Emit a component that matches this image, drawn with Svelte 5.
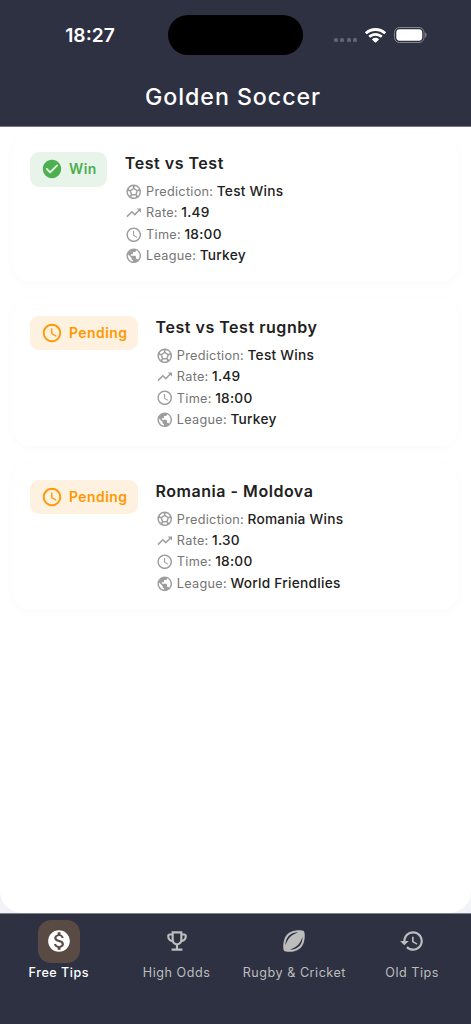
<script lang="ts">
  const icons = {
    check: "M12 2C6.48 2 2 6.48 2 12s4.48 10 10 10 10-4.48 10-10S17.52 2 12 2zM9.29 16.29L5.7 12.7c-.39-.39-.39-1.02 0-1.41.39-.39 1.02-.39 1.41 0L10 14.17l6.88-6.88c.39-.39 1.02-.39 1.41 0 .39.39.39 1.02 0 1.41l-7.59 7.59c-.38.39-1.02.39-1.41 0z",
    clock: "M11.99 2C6.47 2 2 6.48 2 12s4.47 10 9.99 10C17.52 22 22 17.52 22 12S17.52 2 11.99 2zM12 20c-4.42 0-8-3.58-8-8s3.58-8 8-8 8 3.58 8 8-3.58 8-8 8zm.5-13H11v6l5.25 3.15.75-1.23-4.5-2.67z",
    trend: "M16 6l2.29 2.29-4.88 4.88-4-4L2 16.59 3.41 18l6-6 4 4 6.3-6.29L22 12V6z",
    globe: "M12 2C6.48 2 2 6.48 2 12s4.48 10 10 10 10-4.48 10-10S17.52 2 12 2zm-1 17.93c-3.95-.49-7-3.85-7-7.93 0-.62.08-1.21.21-1.79L9 15v1c0 1.1.9 2 2 2v1.93zm6.9-2.54c-.26-.81-1-1.39-1.9-1.39h-1v-3c0-.55-.45-1-1-1H8v-2h2c.55 0 1-.45 1-1V7h2c1.1 0 2-.9 2-2v-.41c2.93 1.19 5 4.06 5 7.41 0 2.08-.8 3.97-2.1 5.39z",
    ball: "M12 2C6.48 2 2 6.48 2 12c0 5.52 4.48 10 10 10s10-4.48 10-10C22 6.48 17.52 2 12 2zm1 3.3l1.35-.95c1.82.56 3.37 1.76 4.38 3.34l-.39 1.34-1.35.46L13 6.9V5.3zm-3.35-.95L11 5.3v1.6L7.01 9.49l-1.35-.46-.39-1.34c1.01-1.57 2.56-2.77 4.38-3.34zM7.08 17.11l-1.14.1C4.73 15.81 4 13.99 4 12c0-.12.01-.23.02-.35l1-.73 1.38.48 1.46 4.34-.78 1.37zm7.42 2.48c-.79.26-1.63.41-2.5.41s-1.71-.15-2.5-.41l-.69-1.49.64-1.1h5.11l.64 1.11-.7 1.48zM14.27 15H9.73l-1.35-4.02L12 8.44l3.63 2.54L14.27 15zm3.79 2.21l-1.14-.1-.79-1.37 1.46-4.34 1.39-.47 1 .73c.01.11.02.22.02.34 0 1.99-.73 3.81-1.94 5.21z",
    dollar: "M12 2C6.48 2 2 6.48 2 12s4.48 10 10 10 10-4.48 10-10S17.52 2 12 2zm1.41 16.09V20h-2.67v-1.93c-1.71-.36-3.16-1.46-3.27-3.4h1.96c.1 1.05.82 1.87 2.65 1.87 1.96 0 2.4-.98 2.4-1.59 0-.83-.44-1.61-2.67-2.14-2.48-.6-4.18-1.62-4.18-3.67 0-1.72 1.39-2.84 3.11-3.21V4h2.67v1.95c1.86.45 2.79 1.86 2.85 3.39H14.3c-.05-1.11-.64-1.87-2.22-1.87-1.5 0-2.4.68-2.4 1.64 0 .84.65 1.39 2.67 1.91s4.18 1.39 4.18 3.91c-.01 1.83-1.38 2.83-3.12 3.16z",
    trophy: "M19 5h-2V3H7v2H5c-1.1 0-2 .9-2 2v1c0 2.55 1.92 4.63 4.39 4.94.63 1.5 1.98 2.63 3.61 2.96V19H7v2h10v-2h-4v-3.1c1.63-.33 2.98-1.46 3.61-2.96C19.08 12.63 21 10.55 21 8V7c0-1.1-.9-2-2-2zM5 8V7h2v3.82C5.84 10.4 5 9.3 5 8zm7 6c-1.65 0-3-1.35-3-3V5h6v6c0 1.65-1.35 3-3 3zm7-6c0 1.3-.84 2.4-2 2.82V7h2v1z",
    rugby: "M21.1 2.9C20.6 2.4 18.8 2 16.5 2c-3.3 0-7.7.8-10.7 3.8C1.3 10.3 1.6 19.8 2.9 21.1c.5.5 2.3.9 4.6.9 3.3 0 7.7-.8 10.7-3.8C22.7 13.7 22.4 4.2 21.1 2.9zM7.2 7.2C9.5 4.9 12.8 4.05 15.9 4 13.3 5 10.4 6.400 8.400 8.400 6.400 10.400 5.100 13.300 4.100 16c0-3 .7-6.400 3.100-8.800zm9.600 9.600c-2.300 2.300-5.600 3.150-8.700 3.200 2.600-1 5.500-2.400 7.500-4.400 2-2 3.300-4.900 4.300-7.600 0 3-.7 6.400-3.100 8.800z",
    history: "M13 3c-4.97 0-9 4.03-9 9H1l3.89 3.89.07.14L9 12H6c0-3.87 3.13-7 7-7s7 3.13 7 7-3.13 7-7 7c-1.93 0-3.68-.79-4.94-2.06l-1.42 1.42C8.27 19.99 10.51 21 13 21c4.97 0 9-4.03 9-9s-4.03-9-9-9zm-1 5v5l4.28 2.54.72-1.21-3.5-2.08V8H12z",
  };

  const tips = [
    { title: "Test vs Test", status: "Win", prediction: "Test Wins", rate: "1.49", time: "18:00", league: "Turkey" },
    { title: "Test vs Test rugnby", status: "Pending", prediction: "Test Wins", rate: "1.49", time: "18:00", league: "Turkey" },
    { title: "Romania - Moldova", status: "Pending", prediction: "Romania Wins", rate: "1.30", time: "18:00", league: "World Friendlies" },
  ];

  const rows = (t) => [
    { icon: icons.ball, label: "Prediction:", value: t.prediction },
    { icon: icons.trend, label: "Rate:", value: t.rate },
    { icon: icons.clock, label: "Time:", value: t.time },
    { icon: icons.globe, label: "League:", value: t.league },
  ];

  const tabs = [
    { label: "Free Tips", icon: icons.dollar },
    { label: "High Odds", icon: icons.trophy },
    { label: "Rugby & Cricket", icon: icons.rugby },
    { label: "Old Tips", icon: icons.history },
  ];

  let active = $state(0);
</script>

{#snippet icon(d)}
  <svg class="icon" viewBox="0 0 24 24"><path {d} /></svg>
{/snippet}

<div class="app">
  <header>
    <div class="status">
      <span class="clock">18:27</span>
      <div class="island"></div>
      <div class="system">
        <div class="dots"><i></i><i></i><i></i><i></i></div>
        <svg class="wifi" viewBox="0 0 21 15">
          <path d="M10.5 0C6.5 0 2.9 1.5.2 4c-.2.2-.2.5 0 .7l1.3 1.3c.2.2.5.2.7 0C4.4 4 7.3 2.9 10.5 2.9S16.6 4 18.8 6c.2.2.5.2.7 0l1.3-1.3c.2-.2.2-.5 0-.7C18.1 1.5 14.5 0 10.5 0z" />
          <path d="M10.5 5c-2.6 0-5 1-6.8 2.6-.2.2-.2.5 0 .7L5 9.6c.2.2.5.2.7 0C7 8.5 8.7 7.8 10.5 7.8s3.5.7 4.8 1.8c.2.2.5.2.7 0l1.3-1.3c.2-.2.2-.5 0-.7C15.5 6 13.1 5 10.5 5z" />
          <path d="M10.5 9.8c-1.3 0-2.4.5-3.3 1.2-.2.2-.2.5 0 .7l2.9 2.9c.2.2.6.2.8 0l2.9-2.9c.2-.2.2-.5 0-.7-.9-.7-2-1.2-3.3-1.2z" />
        </svg>
        <svg class="battery" viewBox="0 0 33 16">
          <rect class="shell" x=".5" y=".5" width="29.5" height="15" rx="5" />
          <rect x="2.3" y="2.3" width="25.9" height="11.4" rx="3.4" />
          <path class="tip" d="M31.2 5.3c1.8.8 1.8 4.6 0 5.4z" />
        </svg>
      </div>
    </div>
    <h1>Golden Soccer</h1>
  </header>

  <main>
    <div class="sheet">
      {#each tips as tip}
        <article class="card">
          <div class="badge {tip.status === 'Win' ? 'win' : 'pending'}">
            {@render icon(tip.status === "Win" ? icons.check : icons.clock)}
            <span>{tip.status}</span>
          </div>
          <div class="info">
            <h2>{tip.title}</h2>
            {#each rows(tip) as row}
              <div class="row">
                {@render icon(row.icon)}
                <span class="label">{row.label}</span>
                <span class="value">{row.value}</span>
              </div>
            {/each}
          </div>
        </article>
      {/each}
    </div>
  </main>

  <nav>
    {#each tabs as tab, i}
      <button class:active={active === i} onclick={() => (active = i)}>
        <span class="tile">{@render icon(tab.icon)}</span>
        <span class="name">{tab.label}</span>
      </button>
    {/each}
  </nav>
</div>

<style>
  :global(body) {
    margin: 0;
  }

  .app {
    display: flex;
    flex-direction: column;
    height: 1024px;
    overflow: hidden;
    background: #f2f3f8;
    font-family: Inter, "Liberation Sans", sans-serif;
    color: #212121;
  }

  .icon {
    display: block;
    flex: none;
    fill: currentColor;
  }

  /* header */
  header {
    box-sizing: border-box;
    height: 127px;
    padding-top: 15px;
    background: #2e3142;
    border-bottom: 1px solid #777483;
    color: #fff;
  }

  .status {
    display: grid;
    grid-template-columns: 168px 135px 1fr;
    align-items: center;
    height: 40px;
  }

  .clock {
    padding-left: 12px;
    text-align: center;
    font-size: 19.2px;
    font-weight: 600;
  }

  .island {
    height: 40px;
    border-radius: 20px;
    background: #000;
  }

  .system {
    display: flex;
    align-items: center;
    padding-left: 31px;
  }

  .dots {
    display: flex;
    gap: 2.4px;
    margin: 10px 8px 0 0;
  }

  .dots i {
    width: 4px;
    height: 4px;
    border-radius: 1.5px;
    background: #626473;
  }

  .wifi {
    width: 21px;
    height: 15px;
    margin-right: 8px;
    fill: #fff;
  }

  .battery {
    width: 33px;
    height: 16px;
    fill: #fff;
  }

  .shell {
    fill: none;
    stroke: #858692;
  }

  .tip {
    fill: #858692;
  }

  h1 {
    margin: 25px 0 0;
    padding-right: 5px;
    text-align: center;
    font-size: 23.2px;
    line-height: 34px;
    font-weight: 500;
    letter-spacing: .95px;
  }

  /* tips */
  main {
    flex: 1;
    min-height: 0;
  }

  .sheet {
    box-sizing: border-box;
    height: 100%;
    padding: 8px 13px 0;
    border-radius: 0 0 22px 22px;
    background: #fff;
  }

  .card {
    box-sizing: border-box;
    display: flex;
    align-items: flex-start;
    gap: 17.5px;
    height: 147px;
    margin-bottom: 16.8px;
    padding: 17px;
    border-radius: 17.5px;
    background: #fff;
    box-shadow: 0 2px 11px rgba(0, 0, 0, .025);
  }

  .badge {
    box-sizing: border-box;
    display: flex;
    align-items: center;
    gap: 6.5px;
    height: 34.5px;
    padding: 0 10.5px;
    border-radius: 9px;
    font-size: 13.9px;
    font-weight: 600;
    letter-spacing: .5px;
  }

  .badge .icon {
    width: 22px;
    height: 22px;
  }

  .win {
    color: #4caf50;
    background: #e8f4e9;
  }

  .pending {
    color: #ff9800;
    background: #fff1e0;
  }

  h2 {
    margin: .4px 0 5.5px;
    font-size: 16px;
    line-height: 23px;
    font-weight: 600;
    letter-spacing: .53px;
  }

  .row {
    display: flex;
    align-items: center;
    height: 21.4px;
    white-space: nowrap;
  }

  .row .icon {
    width: 17.5px;
    height: 17.5px;
    margin-right: 3.8px;
    color: #9e9e9e;
  }

  .label {
    margin-right: 3.5px;
    font-size: 12.7px;
    letter-spacing: .27px;
    color: #757575;
  }

  .value {
    font-size: 13.7px;
    line-height: 17px;
    font-weight: 500;
    letter-spacing: .26px;
  }

  /* bottom bar */
  nav {
    box-sizing: border-box;
    display: grid;
    grid-template-columns: repeat(4, 1fr);
    height: 111px;
    padding-top: 6px;
    border-top: 1px solid #7b8388;
    background: #2e3142;
  }

  button {
    display: flex;
    flex-direction: column;
    align-items: center;
    padding: 0;
    border: none;
    background: none;
    color: #bdbdbd;
    font-family: inherit;
    cursor: pointer;
  }

  .tile {
    display: grid;
    place-items: center;
    width: 42px;
    height: 43px;
    border-radius: 13px;
  }

  .tile .icon {
    width: 26px;
    height: 26px;
    margin-top: -1px;
  }

  .name {
    font-size: 12.6px;
    line-height: 20px;
    letter-spacing: .52px;
    white-space: nowrap;
  }

  .active {
    color: #fff;
  }

  .active .tile {
    background: #594a43;
  }

  .active .name {
    font-weight: 500;
  }
</style>
